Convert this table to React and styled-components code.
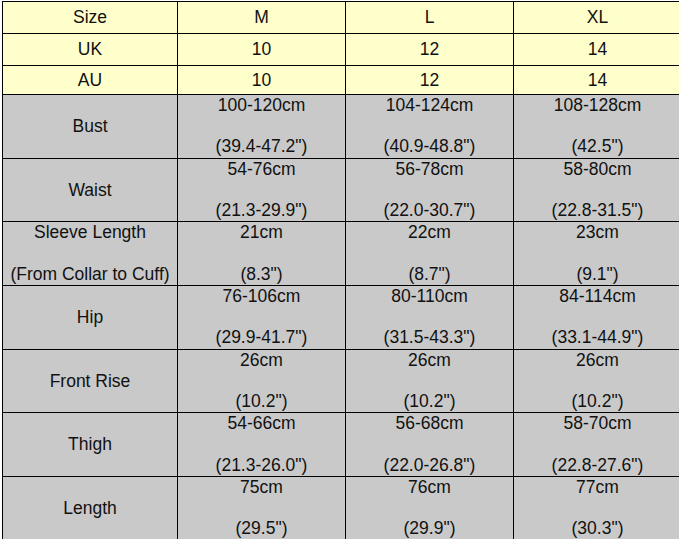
import React from 'react';
import styled, { createGlobalStyle } from 'styled-components';

const GlobalStyle = createGlobalStyle`
    html, body {
        margin: 0;
        padding: 0;
        overflow: hidden;
        background: #ffffff;
    }
`;

const Page = styled.div`
    padding: 1px 0 0 2px;
    width: 700px;
`;

const Table = styled.table`
    border-collapse: collapse;
    table-layout: fixed;
    width: 680px;
    font-family: "Liberation Sans", Arial, sans-serif;
    font-size: 17.5px;
    color: #111;
`;

const Row = styled.tr`
    height: ${props => props.height}px;
    background: ${props => props.head ? '#ffffcc' : '#c9c9c9'};
`;

const Cell = styled.td`
    border: 1px solid #000;
    padding: 0;
    text-align: center;
    vertical-align: ${props => props.top ? 'top' : 'middle'};
    line-height: 20.6px;
    white-space: nowrap;
    overflow: hidden;
`;

const heads = [
    ['Size', 'M', 'L', 'XL'],
    ['UK', '10', '12', '14'],
    ['AU', '10', '12', '14'],
];

const rows = [
    ['Bust', ['100-120cm', '(39.4-47.2")'], ['104-124cm', '(40.9-48.8")'], ['108-128cm', '(42.5")']],
    ['Waist', ['54-76cm', '(21.3-29.9")'], ['56-78cm', '(22.0-30.7")'], ['58-80cm', '(22.8-31.5")']],
    [['Sleeve Length', '(From Collar to Cuff)'], ['21cm', '(8.3")'], ['22cm', '(8.7")'], ['23cm', '(9.1")']],
    ['Hip', ['76-106cm', '(29.9-41.7")'], ['80-110cm', '(31.5-43.3")'], ['84-114cm', '(33.1-44.9")']],
    ['Front Rise', ['26cm', '(10.2")'], ['26cm', '(10.2")'], ['26cm', '(10.2")']],
    ['Thigh', ['54-66cm', '(21.3-26.0")'], ['56-68cm', '(22.0-26.8")'], ['58-70cm', '(22.8-27.6")']],
    ['Length', ['75cm', '(29.5")'], ['76cm', '(29.9")'], ['77cm', '(30.3")']],
];

const Stacked = ({ lines }) => (
    <>
        {lines[0]}<br /><br />{lines[1]}
    </>
);

export default function App() {
    return (
        <Page>
            <GlobalStyle />
            <Table>
                <colgroup>
                    <col style={{ width: 175 }} />
                    <col style={{ width: 168 }} />
                    <col style={{ width: 168 }} />
                    <col style={{ width: 168 }} />
                </colgroup>
                <tbody>
                    {heads.map((r, i) => (
                        <Row head key={r[0]} height={i === 2 ? 29 : 32}>
                            {r.map((c, j) => <Cell key={j}>{c}</Cell>)}
                        </Row>
                    ))}
                    {rows.map((r, i) => (
                        <Row key={i} height={63.7}>
                            {Array.isArray(r[0])
                                ? <Cell top><Stacked lines={r[0]} /></Cell>
                                : <Cell>{r[0]}</Cell>}
                            {r.slice(1).map((c, j) => (
                                <Cell top key={j}><Stacked lines={c} /></Cell>
                            ))}
                        </Row>
                    ))}
                </tbody>
            </Table>
        </Page>
    );
}
